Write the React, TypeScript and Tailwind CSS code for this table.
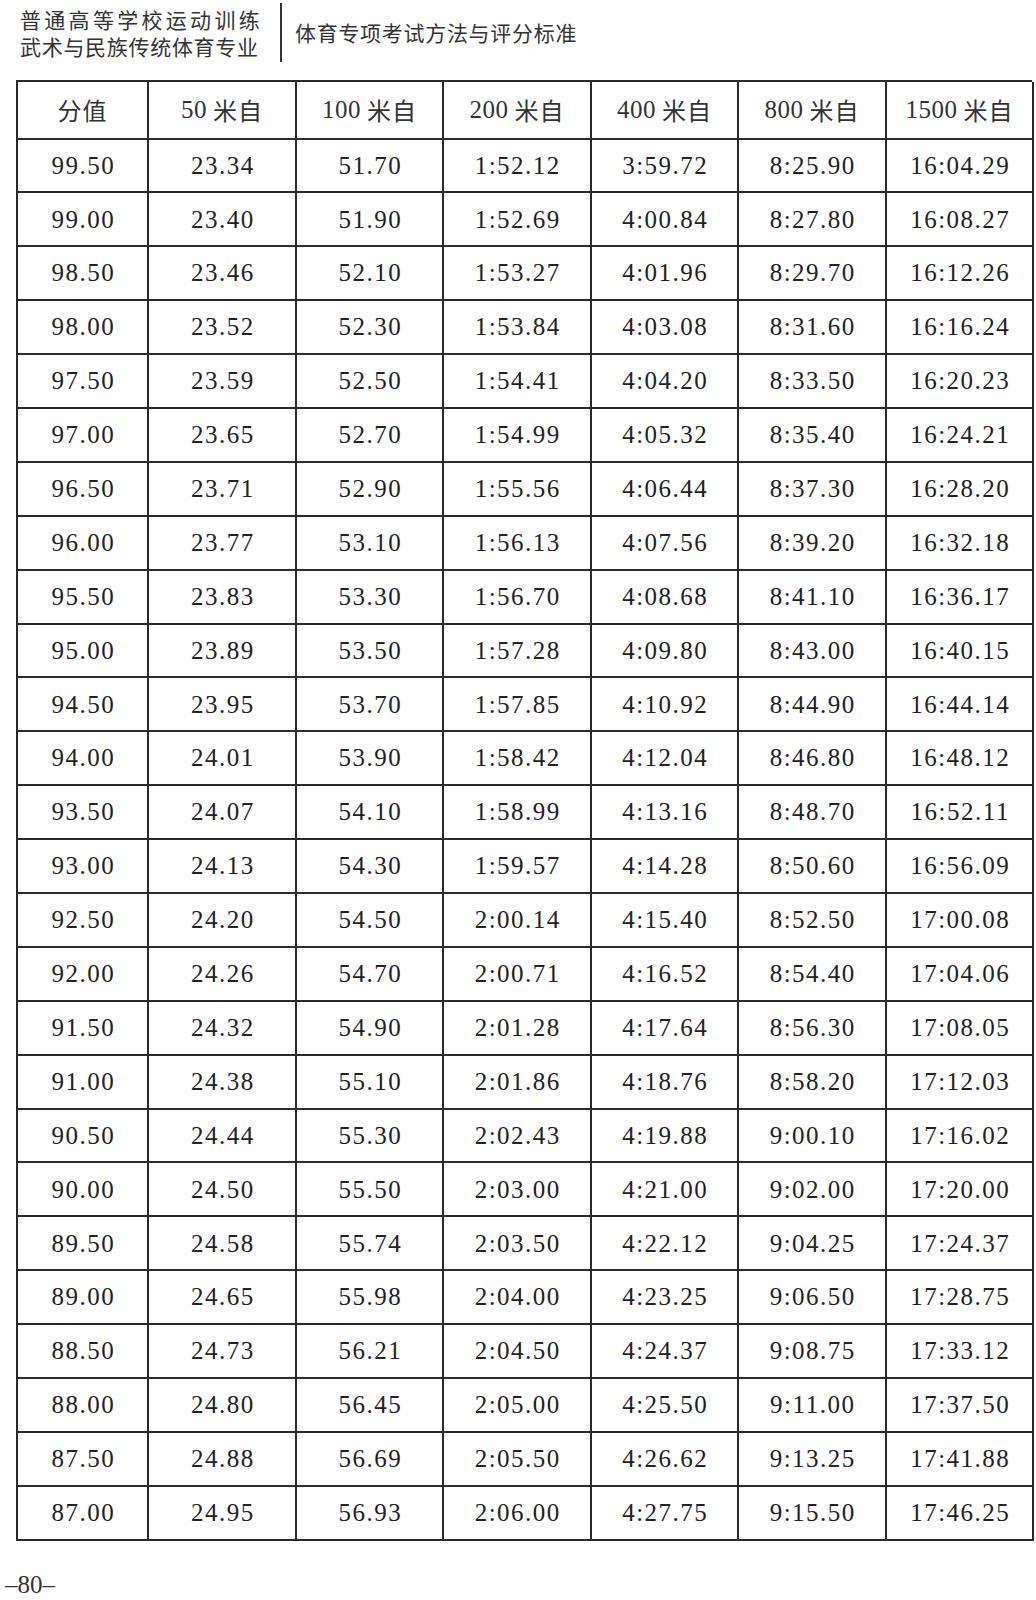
const heads = [
  ['', '分值'],
  ['50', '米自'],
  ['100', '米自'],
  ['200', '米自'],
  ['400', '米自'],
  ['800', '米自'],
  ['1500', '米自'],
];

const rows: string[][] = [
  ['99.50', '23.34', '51.70', '1:52.12', '3:59.72', '8:25.90', '16:04.29'],
  ['99.00', '23.40', '51.90', '1:52.69', '4:00.84', '8:27.80', '16:08.27'],
  ['98.50', '23.46', '52.10', '1:53.27', '4:01.96', '8:29.70', '16:12.26'],
  ['98.00', '23.52', '52.30', '1:53.84', '4:03.08', '8:31.60', '16:16.24'],
  ['97.50', '23.59', '52.50', '1:54.41', '4:04.20', '8:33.50', '16:20.23'],
  ['97.00', '23.65', '52.70', '1:54.99', '4:05.32', '8:35.40', '16:24.21'],
  ['96.50', '23.71', '52.90', '1:55.56', '4:06.44', '8:37.30', '16:28.20'],
  ['96.00', '23.77', '53.10', '1:56.13', '4:07.56', '8:39.20', '16:32.18'],
  ['95.50', '23.83', '53.30', '1:56.70', '4:08.68', '8:41.10', '16:36.17'],
  ['95.00', '23.89', '53.50', '1:57.28', '4:09.80', '8:43.00', '16:40.15'],
  ['94.50', '23.95', '53.70', '1:57.85', '4:10.92', '8:44.90', '16:44.14'],
  ['94.00', '24.01', '53.90', '1:58.42', '4:12.04', '8:46.80', '16:48.12'],
  ['93.50', '24.07', '54.10', '1:58.99', '4:13.16', '8:48.70', '16:52.11'],
  ['93.00', '24.13', '54.30', '1:59.57', '4:14.28', '8:50.60', '16:56.09'],
  ['92.50', '24.20', '54.50', '2:00.14', '4:15.40', '8:52.50', '17:00.08'],
  ['92.00', '24.26', '54.70', '2:00.71', '4:16.52', '8:54.40', '17:04.06'],
  ['91.50', '24.32', '54.90', '2:01.28', '4:17.64', '8:56.30', '17:08.05'],
  ['91.00', '24.38', '55.10', '2:01.86', '4:18.76', '8:58.20', '17:12.03'],
  ['90.50', '24.44', '55.30', '2:02.43', '4:19.88', '9:00.10', '17:16.02'],
  ['90.00', '24.50', '55.50', '2:03.00', '4:21.00', '9:02.00', '17:20.00'],
  ['89.50', '24.58', '55.74', '2:03.50', '4:22.12', '9:04.25', '17:24.37'],
  ['89.00', '24.65', '55.98', '2:04.00', '4:23.25', '9:06.50', '17:28.75'],
  ['88.50', '24.73', '56.21', '2:04.50', '4:24.37', '9:08.75', '17:33.12'],
  ['88.00', '24.80', '56.45', '2:05.00', '4:25.50', '9:11.00', '17:37.50'],
  ['87.50', '24.88', '56.69', '2:05.50', '4:26.62', '9:13.25', '17:41.88'],
  ['87.00', '24.95', '56.93', '2:06.00', '4:27.75', '9:15.50', '17:46.25'],
];

export default function App() {
  return (
    <div className="w-[1036px] h-[1600px] bg-white text-[#222] font-['Liberation_Serif']">
      {/* running head */}
      <div className="h-[80px] flex items-start font-['Noto_Sans_CJK_SC'] text-[#333]">
        <div className="w-[250px] ml-[20px] pt-[6px] text-[21px] leading-[27px]">
          <div className="tracking-[3.3px] whitespace-nowrap">普通高等学校运动训练</div>
          <div className="tracking-[0.7px] whitespace-nowrap">武术与民族传统体育专业</div>
        </div>
        <div className="ml-[10px] mt-[3px] w-[2px] h-[59px] bg-[#333]" />
        <div className="ml-[13px] mt-[19px] text-[21px] leading-[27px] tracking-[0.7px] whitespace-nowrap">
          体育专项考试方法与评分标准
        </div>
      </div>

      {/* score table */}
      <div className="ml-[16px] w-[1016px] border-t-2 border-l-2 border-[#2a2a2a]">
        <div className="grid grid-cols-[131px_148px_147px_148px_147px_148px_147px]">
          {heads.map(([num, label]) => (
            <div
              key={num + label}
              className="h-[57.5px] flex items-center justify-center gap-[6px] border-r-2 border-b-2 border-[#2a2a2a] text-[#333]"
            >
              {num && <span className="text-[25px] tracking-[0.5px]">{num}</span>}
              <span className="font-['Noto_Sans_CJK_SC'] text-[24px] tracking-[1px]">{label}</span>
            </div>
          ))}
        </div>
        {rows.map((r) => (
          <div key={r[0]} className="grid grid-cols-[131px_148px_147px_148px_147px_148px_147px]">
            {r.map((v, j) => (
              <div
                key={j}
                className="h-[53.9px] flex items-center justify-center border-r-2 border-b-2 border-[#2a2a2a] text-[25px] tracking-[1.5px] pl-[1.5px]"
              >
                {v}
              </div>
            ))}
          </div>
        ))}
      </div>

      {/* folio */}
      <div className="mt-[30px] ml-[5px] text-[25px] leading-[28px] text-[#333]">–80–</div>
    </div>
  );
}
